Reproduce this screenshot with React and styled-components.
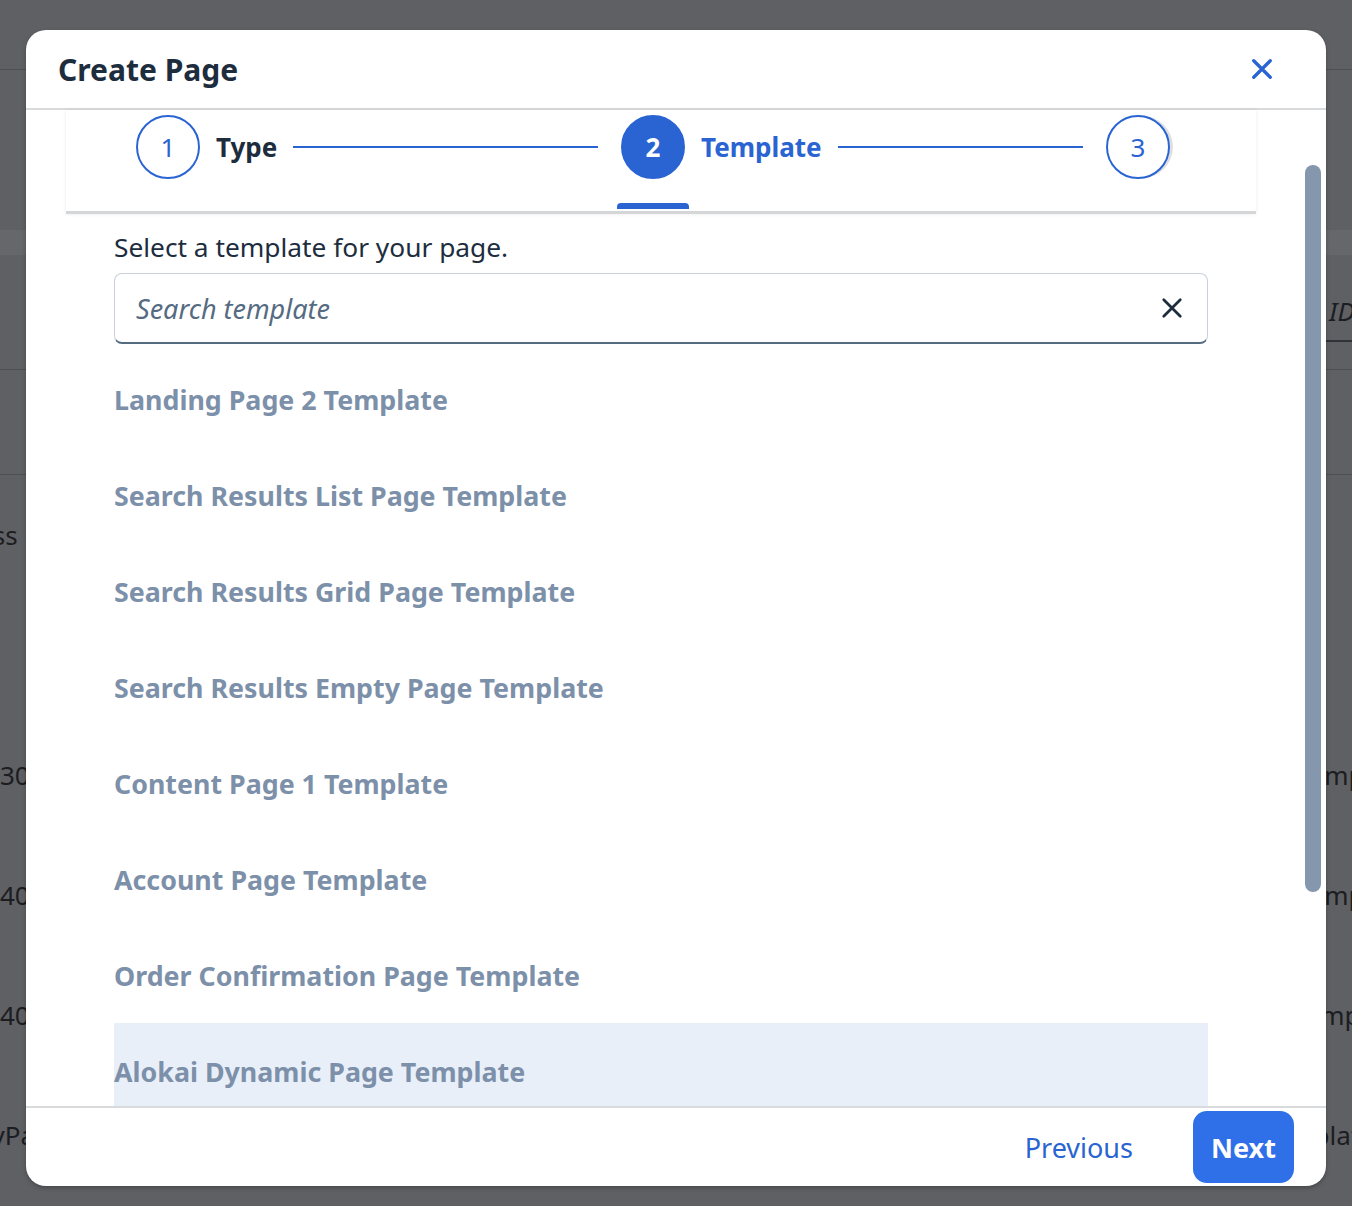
import styled, { createGlobalStyle, css } from "styled-components";

const GlobalStyle = createGlobalStyle`
  html, body {
    margin: 0;
    padding: 0;
  }
  body {
    font-family: "Noto Sans", "Liberation Sans", sans-serif;
    color: #1d2d3e;
  }
  * {
    box-sizing: border-box;
  }
`;

const BLUE = "#2a64d2";
const ITEM = "#7d90a9";

// ---------- page behind the dialog ----------

const Screen = styled.div`
  position: relative;
  width: 1352px;
  height: 1206px;
  overflow: hidden;
  background: #5f6064;
`;

const BgPage = styled.div`
  display: flex;
  flex-direction: column;
  color: #1b1d21;
  font-size: 26px;
`;

const BgBar = styled.div`
  height: ${(p) => p.h}px;
  flex-shrink: 0;
  ${(p) =>
    p.line &&
    css`
      border-bottom: 1px solid #4e4f53;
    `}
  ${(p) =>
    p.band &&
    css`
      background: #66676b;
    `}
`;

const BgFilter = styled.div`
  height: 115px;
  border-bottom: 1px solid #4e4f53;
  display: flex;
  justify-content: flex-end;
  align-items: center;
`;

const BgInput = styled.div`
  width: 60px;
  height: 60px;
  margin-right: -34px;
  display: flex;
  align-items: center;
  border-bottom: 2px solid #2f3338;
  font-style: italic;
  padding-left: 3px;
`;

const BgRow = styled.div`
  height: 120px;
  display: grid;
  grid-template-columns: 160px 1fr 140px;
  align-items: center;
  margin-left: -45px;
  margin-right: -84px;
  white-space: nowrap;
`;

const BgCell = styled.div`
  margin-left: ${(p) => p.indent || 0}px;
  overflow: hidden;
`;

// ---------- dialog ----------

const Dialog = styled.div`
  position: absolute;
  left: 26px;
  top: 30px;
  width: 1300px;
  height: 1156px;
  background: #fff;
  border-radius: 20px;
  box-shadow: 0 2px 4px rgba(0, 0, 0, 0.25);
  display: flex;
  flex-direction: column;
  overflow: hidden;
`;

const Header = styled.div`
  height: 80px;
  flex-shrink: 0;
  padding: 0 32px;
  display: flex;
  align-items: center;
  justify-content: space-between;
  border-bottom: 2px solid #d9dadc;
`;

const Title = styled.h1`
  margin: 0;
  font-size: 30px;
  font-weight: 700;
  color: #1d2d3e;
`;

const IconButton = styled.button`
  border: 0;
  background: none;
  padding: 0;
  width: 40px;
  height: 40px;
  display: flex;
  align-items: center;
  justify-content: center;
  margin-right: ${(p) => p.$edge ?? -10}px;
  cursor: pointer;
  color: ${(p) => p.color || BLUE};
`;

const Body = styled.div`
  flex: 1;
  min-height: 0;
  display: flex;
  padding-left: 40px;
`;

const Content = styled.div`
  width: 1190px;
  display: flex;
  flex-direction: column;
`;

const Stepper = styled.div`
  height: 104px;
  flex-shrink: 0;
  padding: 5px 86px 0 70px;
  display: flex;
  align-items: flex-start;
  border-bottom: 3px solid #d5d6d8;
  box-shadow: 0 0 4px rgba(0, 0, 0, 0.08);
`;

const Step = styled.div`
  display: flex;
  align-items: center;
  gap: 16px;
  flex: ${(p) => (p.last ? "none" : 1)};
  padding-right: ${(p) => (p.last ? 0 : 23)}px;
  height: 64px;
`;

const StepCircle = styled.div`
  position: relative;
  width: 64px;
  height: 64px;
  flex-shrink: 0;
  border-radius: 50%;
  border: 2px solid ${BLUE};
  display: flex;
  align-items: center;
  justify-content: center;
  font-size: 26px;
  color: ${BLUE};
  background: #fff;
  ${(p) =>
    p.active &&
    css`
      background: ${BLUE};
      color: #fff;
      font-weight: 700;
      &::after {
        content: "";
        position: absolute;
        left: -6px;
        top: 86px;
        width: 72px;
        height: 6px;
        border-radius: 4px 4px 0 0;
        background: ${BLUE};
      }
    `}
  ${(p) =>
    p.last &&
    css`
      box-shadow: 4px 0 0 -1px #dedfe1;
    `}
`;

const StepLabel = styled.span`
  font-size: 26px;
  font-weight: 700;
  color: ${(p) => (p.active ? BLUE : "#1d2d3e")};
  white-space: nowrap;
`;

const StepLine = styled.div`
  flex: 1;
  height: 2px;
  background: ${BLUE};
`;

const Main = styled.div`
  flex: 1;
  min-height: 0;
  overflow: hidden;
  padding: 16px 48px 0;
`;

const Lead = styled.p`
  margin: 0 0 9px;
  font-size: 26.3px;
  line-height: 34px;
  color: #1d2d3e;
`;

const SearchBox = styled.div`
  height: 71px;
  display: flex;
  align-items: center;
  padding: 0 25px 0 21px;
  border: 1px solid #c9d1da;
  border-bottom: 2px solid #556b82;
  border-radius: 8px;
`;

const SearchInput = styled.input`
  flex: 1;
  border: 0;
  outline: none;
  font-family: inherit;
  font-size: 27px;
  color: #1d2d3e;
  background: transparent;
  padding: 0;
  &::placeholder {
    color: #556b82;
    font-style: italic;
  }
`;

const List = styled.ul`
  list-style: none;
  margin: 7px 0 0;
  padding: 0;
`;

const Item = styled.li`
  height: 96px;
  display: flex;
  align-items: center;
  font-size: 26.8px;
  font-weight: 700;
  color: ${ITEM};
  background: ${(p) => (p.selected ? "#e8eff9" : "transparent")};
`;

const ScrollTrack = styled.div`
  width: 16px;
  margin-left: 49px;
  padding-top: 55px;
`;

const ScrollThumb = styled.div`
  width: 16px;
  height: 727px;
  border-radius: 8px;
  background: #8597ac;
`;

const Footer = styled.div`
  height: 80px;
  flex-shrink: 0;
  border-top: 2px solid #d9dadc;
  display: flex;
  align-items: center;
  justify-content: flex-end;
  padding: 0 32px 0 0;
`;

const TextButton = styled.button`
  border: 0;
  background: none;
  height: 72px;
  padding: 0 20px;
  margin-right: 40px;
  font-family: inherit;
  font-size: 27px;
  color: ${BLUE};
  cursor: pointer;
`;

const PrimaryButton = styled.button`
  border: 0;
  height: 72px;
  width: 101px;
  border-radius: 14px;
  background: #2f70e8;
  color: #fff;
  font-family: inherit;
  font-size: 27px;
  font-weight: 700;
  cursor: pointer;
`;

const CloseIcon = ({ size = 24, stroke = 3.4 }) => (
  <svg width={size} height={size} viewBox="0 0 24 24" fill="none">
    <path
      d="M3 3L21 21M21 3L3 21"
      stroke="currentColor"
      strokeWidth={stroke}
      strokeLinecap="round"
    />
  </svg>
);

const templates = [
  "Landing Page 2 Template",
  "Search Results List Page Template",
  "Search Results Grid Page Template",
  "Search Results Empty Page Template",
  "Content Page 1 Template",
  "Account Page Template",
  "Order Confirmation Page Template",
  "Alokai Dynamic Page Template",
];

const bgRows = [
  { left: "Class", indent: 0, right: "", rIndent: 0 },
  { left: "", indent: 0, right: "", rIndent: 0 },
  { left: "30000", indent: 45, right: "Temp", rIndent: 1 },
  { left: "40000", indent: 45, right: "Temp", rIndent: 1 },
  { left: "40000", indent: 45, right: "Temp", rIndent: -3 },
  { left: "MyPage", indent: 13, right: "Template", rIndent: -34 },
];

export default function App() {
  return (
    <Screen>
      <GlobalStyle />
      <BgPage>
        <BgBar h={70} line />
        <BgBar h={160} />
        <BgBar h={25} band />
        <BgFilter>
          <BgInput>ID</BgInput>
        </BgFilter>
        <BgBar h={105} line />
        {bgRows.map((r, i) => (
          <BgRow key={i}>
            <BgCell indent={r.indent}>{r.left}</BgCell>
            <div />
            <BgCell indent={r.rIndent}>{r.right}</BgCell>
          </BgRow>
        ))}
      </BgPage>

      <Dialog role="dialog" aria-label="Create Page">
        <Header>
          <Title>Create Page</Title>
          <IconButton $edge={12} aria-label="Close">
            <CloseIcon size={22} stroke={3.6} />
          </IconButton>
        </Header>

        <Body>
          <Content>
            <Stepper>
              <Step>
                <StepCircle>1</StepCircle>
                <StepLabel>Type</StepLabel>
                <StepLine />
              </Step>
              <Step>
                <StepCircle active>2</StepCircle>
                <StepLabel active>Template</StepLabel>
                <StepLine />
              </Step>
              <Step last>
                <StepCircle last>3</StepCircle>
              </Step>
            </Stepper>

            <Main>
              <Lead>Select a template for your page.</Lead>
              <SearchBox>
                <SearchInput placeholder="Search template" />
                <IconButton color="#1d2d3e" aria-label="Clear">
                  <CloseIcon size={22} stroke={3} />
                </IconButton>
              </SearchBox>
              <List>
                {templates.map((t, i) => (
                  <Item key={t} selected={i === templates.length - 1}>
                    {t}
                  </Item>
                ))}
              </List>
            </Main>
          </Content>
          <ScrollTrack>
            <ScrollThumb />
          </ScrollTrack>
        </Body>

        <Footer>
          <TextButton>Previous</TextButton>
          <PrimaryButton>Next</PrimaryButton>
        </Footer>
      </Dialog>
    </Screen>
  );
}
